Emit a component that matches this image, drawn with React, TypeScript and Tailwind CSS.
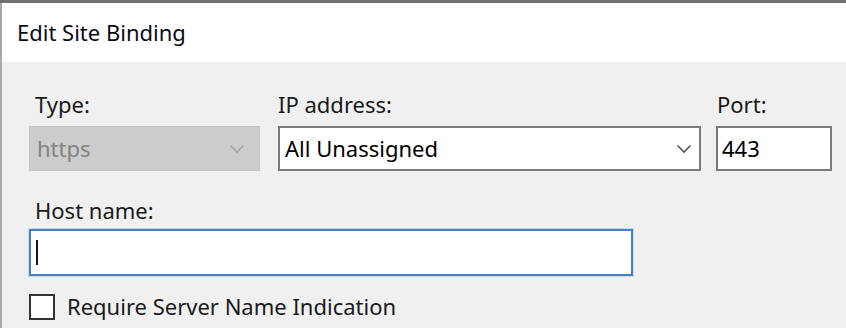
import React from 'react';

function Chevron({ color }: { color: string }) {
  return (
    <svg width="16" height="10" viewBox="0 0 16 10" fill="none">
      <path d="M1.5 1.5 L8 8 L14.5 1.5" stroke={color} strokeWidth="1.6" />
    </svg>
  );
}

export default function App() {
  return (
    <div
      className="w-[846px] h-[328px] overflow-hidden bg-[#f0f0f0] text-[#000000] text-[22px] leading-none"
      style={{ fontFamily: '"Noto Sans", "Open Sans", sans-serif' }}
    >
      <div className="h-[3px] bg-[#707070]" />
      <div className="h-[325px] border-l-2 border-[#a9a9a9] flex flex-col">
        {/* title bar */}
        <div className="h-[59px] bg-white flex items-center pl-[15px] pb-[2px] text-[22px] text-[#0a0a14]">
          Edit Site Binding
        </div>

        <div className="flex flex-col pl-[27px] pt-[31px]">
          <div className="flex items-start">
            <div className="flex flex-col w-[231px]">
              <span className="pl-[6px] h-[33px] text-[#1a1a1a]">Type:</span>
              <div className="h-[45px] bg-[#cccccc] border border-[#c3c3c3] flex items-center justify-between pl-[7px] pr-[14px] text-[#838383]">
                <span className="pb-[2px]">https</span>
                <Chevron color="#a6a6a6" />
              </div>
            </div>
            <div className="flex flex-col w-[423px] ml-[18px]">
              <span className="h-[33px] text-[#1a1a1a]">IP address:</span>
              <div className="h-[45px] bg-white border-2 border-[#7a7a7a] flex items-center justify-between pl-[5px] pr-[7px]">
                <span className="pb-[2px]">All Unassigned</span>
                <Chevron color="#555555" />
              </div>
            </div>
            <div className="flex flex-col w-[116px] ml-[15px]">
              <span className="pl-[1px] h-[33px] text-[#1a1a1a]">Port:</span>
              <div className="h-[45px] bg-white border-2 border-[#7a7a7a] flex items-center pl-[4px]">
                <span className="pb-[2px]">443</span>
              </div>
            </div>
          </div>

          <span className="pl-[6px] mt-[28px] h-[30px] text-[#1a1a1a]">Host name:</span>
          <div className="w-[604px] h-[47px] bg-white border-2 border-[#4a7fc3] flex items-center pl-[5px] ring-1 ring-[#c4dbf3]">
            <div className="w-[2px] h-[25px] bg-[#1a1a1a]" />
          </div>

          <label className="flex items-center mt-[18px]">
            <span className="w-[26px] h-[26px] border-2 border-[#333333] bg-white" />
            <span className="ml-[12px] pb-[2px] text-[#1a1a1a]">Require Server Name Indication</span>
          </label>
        </div>
      </div>
    </div>
  );
}
